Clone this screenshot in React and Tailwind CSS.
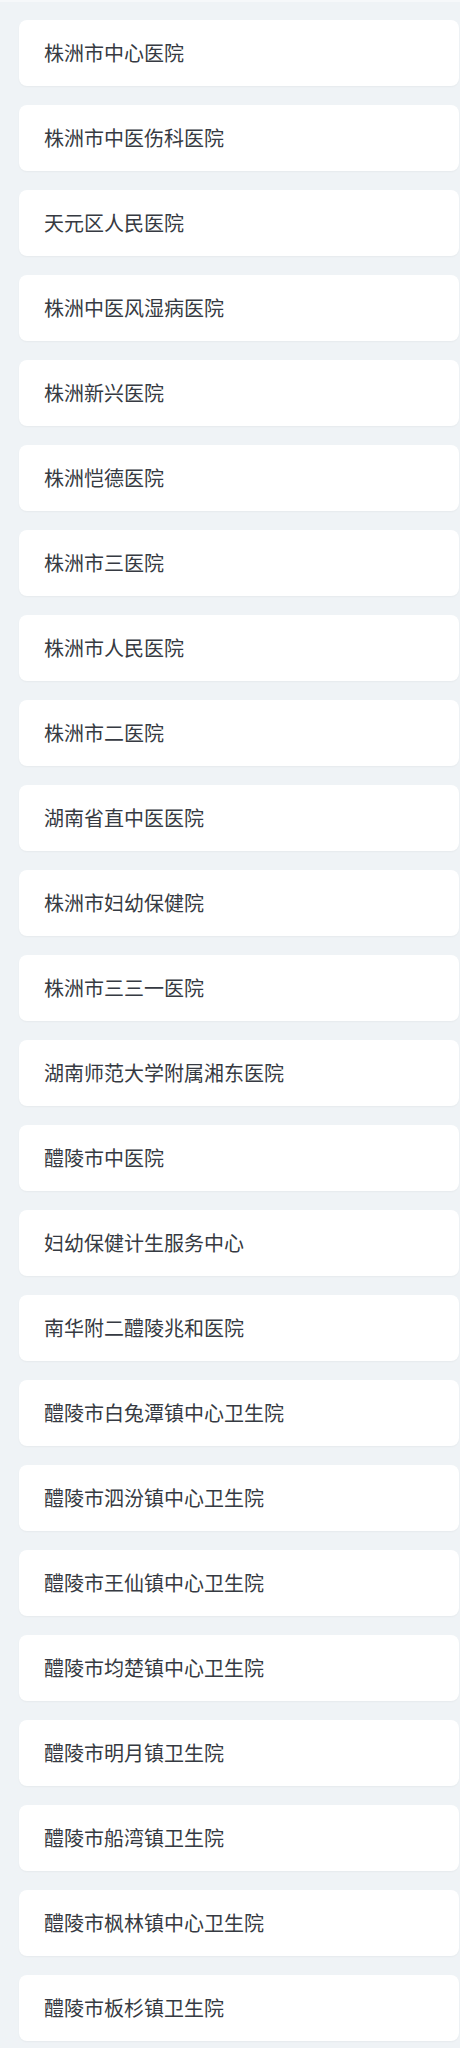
import React from 'react';

const hospitals = [
  "株洲市中心医院",
  "株洲市中医伤科医院",
  "天元区人民医院",
  "株洲中医风湿病医院",
  "株洲新兴医院",
  "株洲恺德医院",
  "株洲市三医院",
  "株洲市人民医院",
  "株洲市二医院",
  "湖南省直中医医院",
  "株洲市妇幼保健院",
  "株洲市三三一医院",
  "湖南师范大学附属湘东医院",
  "醴陵市中医院",
  "妇幼保健计生服务中心",
  "南华附二醴陵兆和医院",
  "醴陵市白兔潭镇中心卫生院",
  "醴陵市泗汾镇中心卫生院",
  "醴陵市王仙镇中心卫生院",
  "醴陵市均楚镇中心卫生院",
  "醴陵市明月镇卫生院",
  "醴陵市船湾镇卫生院",
  "醴陵市枫林镇中心卫生院",
  "醴陵市板杉镇卫生院",
];

export default function App() {
  return (
    <div
      className="min-h-[2048px] bg-[#eff3f6] border-t-2 border-[#f6f8fa]"
      style={{ fontFamily: '"Noto Sans CJK SC", "Noto Sans", sans-serif' }}
    >
      {/* hospital list */}
      <div className="flex flex-col gap-[19px] pt-[18px] pl-[19px] pr-px">
        {hospitals.map((name) => (
          <div
            key={name}
            className="h-[66px] flex items-center pl-[25px] bg-white rounded-lg shadow-[0_1px_2px_rgba(0,0,0,0.04)]"
          >
            <span className="text-[20px] leading-none text-[#363a42]">{name}</span>
          </div>
        ))}
      </div>
    </div>
  );
}
